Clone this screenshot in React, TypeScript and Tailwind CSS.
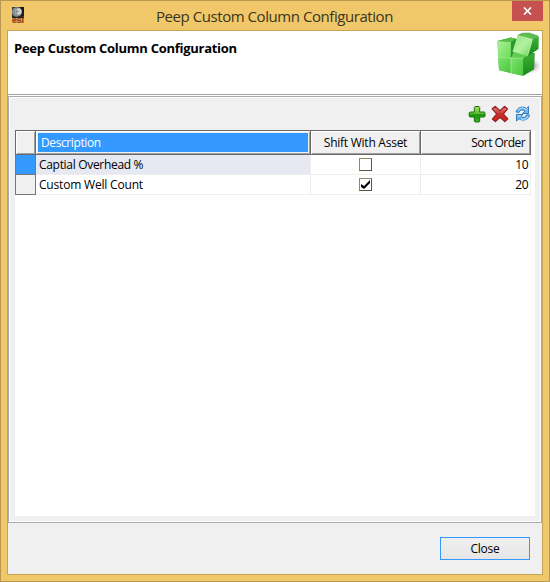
import React from "react";

function LogoIcon() {
  return (
    <svg className="absolute left-[11px] top-[6px]" width="13" height="17" viewBox="0 0 13 17">
      <rect width="12" height="11" fill="#3a3c3c" />
      <circle cx="4.9" cy="5" r="4.8" fill="#8b8e8e" />
      <path d="M8 0h4v11H8l2.5-5Z" fill="#161818" />
      <circle cx="6.5" cy="4.5" r="3.2" fill="#d0d3d3" />
      <path d="M4.8 1.5v6M3 4.5h4" stroke="#777" strokeWidth=".8" />
      <path d="M0 8.5 4 10l4-1 2-3 2-1v6H0Z" fill="#222424" opacity=".75" />
      <rect y="11" width="12" height="5" fill="#d49a58" />
      <text x="0" y="15.8" fontSize="8.5" fontWeight="700" fontFamily="Liberation Sans, sans-serif" fill="#9a430c" textLength="12" lengthAdjust="spacingAndGlyphs">esi</text>
    </svg>
  );
}

function CubeIcon() {
  return (
    <svg className="absolute left-[487px] top-0" width="47" height="49" viewBox="0 0 47 49">
      <defs>
        <linearGradient id="face" x2="1" y2="1"><stop stopColor="#abf096" /><stop offset="1" stopColor="#6bdc59" /></linearGradient>
        <linearGradient id="lower" x2="1" y2="1"><stop stopColor="#7ee36b" /><stop offset="1" stopColor="#48c63c" /></linearGradient>
        <linearGradient id="lid" x2="1" y2="1"><stop stopColor="#8ee47b" /><stop offset=".5" stopColor="#b4f2a1" /><stop offset="1" stopColor="#69d657" /></linearGradient>
        <linearGradient id="side" x2="0" y2="1"><stop stopColor="#3eaf35" /><stop offset="1" stopColor="#198a1b" /></linearGradient>
        <radialGradient id="shade"><stop stopColor="#444" stopOpacity=".8" /><stop offset="1" stopColor="#999" stopOpacity="0" /></radialGradient>
      </defs>
      <ellipse cx="35" cy="35" rx="11" ry="8" fill="url(#shade)" />
      <path d="M2.5 10 16 6.5 22 8 28 22 39.5 22 39 38 28 44.7 4 39Z" fill="#27982a" />
      <path d="M2.5 10 15.5 6.5 21 8 16 11Z" fill="#58bd48" />
      <path d="M2.5 10 16 11 15.7 27 3 26.2Z" fill="url(#face)" />
      <path d="M16 27 18.5 21.2 32 25 28.3 27.7Z" fill="#62cd50" />
      <path d="M3 26.2 15.8 27 16 42.2 4.2 39.3Z" fill="url(#lower)" />
      <path d="M15.8 27 28.3 27.7 28.3 44.7 16 42.2Z" fill="url(#lower)" />
      <path d="M3 26.2 15.8 27 28.3 27.7M15.8 27 16 42" fill="none" stroke="#b0f29c" strokeWidth=".7" />
      <path d="M28.3 27.7 39.5 22 39 38.3 28.3 44.7Z" fill="url(#side)" />
      <path d="M22.5 4.5 27 2.3 34 2 43 5 37.5 8.2Z" fill="#5fc04f" stroke="#288d25" strokeWidth=".5" />
      <path d="M37.5 8.2 43.8 5.3 43.5 18 32.5 25.2Z" fill="url(#side)" />
      <path d="M22.5 4.5 37.5 8.2 32.5 25.2 17.5 20.8Z" fill="url(#lid)" />
      <path d="M22.5 4.5 37.5 8.2 32.5 25.2" fill="none" stroke="#b8f5a6" strokeWidth=".6" />
    </svg>
  );
}

function Toolbar() {
  return (
    <div className="flex h-[32px] justify-end gap-[5px] pr-[3px] pt-[7px]">
      <svg width="18" height="18" viewBox="0 0 18 18">
        <defs><linearGradient id="plus" y2="1" x2="0"><stop stopColor="#a6df69" /><stop offset=".48" stopColor="#59b92c" /><stop offset=".52" stopColor="#1b9611" /><stop offset="1" stopColor="#35af20" /></linearGradient></defs>
        <path d="M7 1.5h4l.7.8V7h4.5l.8.8v3.4l-.8.8h-4.5v4.2l-.7.8H7l-.7-.8V12H2l-.8-.8V7.8L2 7h4.3V2.3Z" fill="url(#plus)" stroke="#1d7113" />
      </svg>
      <svg width="18" height="18" viewBox="0 0 18 18">
        <defs><linearGradient id="cross" y2="1" x2="0"><stop stopColor="#e88a80" /><stop offset=".5" stopColor="#c0302a" /><stop offset="1" stopColor="#dc2525" /></linearGradient></defs>
        <path d="M1.2 3.8 4.2 1.4 9 5.7 13.5 1.4 16.5 3.8 12.4 9l4.4 4.8-3 2.9L9 12.3l-4.6 4.4-3-2.7 4.2-5Z" fill="url(#cross)" stroke="#8f1717" strokeWidth="1.1" strokeLinejoin="round" />
      </svg>
      <svg width="18" height="18" viewBox="0 0 18 18">
        <g fill="#69b9f0" stroke="#2970b5" strokeWidth=".9" strokeLinejoin="round">
          <path d="M2 7C3 2.5 8.5.5 12.5 3.5L14.5 1.5v7H8.5l2.5-2.5C8.7 4.3 6 4.8 5 7.4Z" />
          <path d="M15.5 10c-1 4.8-6.6 6.6-10.5 3.7L2.5 16V9.5H9l-2.4 2.3C9.2 13 12 12.3 12.5 9.8Z" />
        </g>
        <path d="M4 5c2-2.5 5.5-2.6 8-.4l1.5-1M4 11h3M7 14c3 1 6 .2 7-2.8" fill="none" stroke="#bee5ff" />
      </svg>
    </div>
  );
}

function Check({ checked = false }: { checked?: boolean }) {
  return (
    <span className="flex h-[13px] w-[13px] items-center justify-center border border-[#58583c] border-t-[#8c8c6b] border-l-[#8c8c6b] bg-white">
      {checked && <svg width="9" height="9" viewBox="0 0 9 9"><path d="M0 4v3l3 2 6-6V0L3 6Z" fill="#000" /></svg>}
    </span>
  );
}

function Row({ name, order, checked = false, selected = false }: { name: string; order: string; checked?: boolean; selected?: boolean }) {
  return (
    <div className="grid h-[20px] grid-cols-[21px_275px_110px_110px] text-[12px]">
      <div className={"border-x border-b border-[#777] " + (selected ? "bg-[#3399ff]" : "bg-[#f0f0f0]")} />
      <div className={"flex items-center border-r border-b border-[#eeeeee] pl-[3px] leading-[18px] " + (selected ? "bg-[#e6e9f2]" : "bg-white")}>
        <span className={selected ? "tracking-[-0.31px]" : "tracking-[-0.19px]"}>{name}</span>
      </div>
      <div className="flex items-center justify-center border-r border-b border-[#eeeeee]"><Check checked={checked} /></div>
      <div className="flex items-center justify-end border-r border-b border-[#eeeeee] pr-[2px] tracking-[-0.5px]">{order}</div>
    </div>
  );
}

export default function App() {
  return (
    <div className="flex h-[582px] w-[550px] flex-col border border-[#b89850] bg-[#f0c869] font-['Open_Sans','Noto_Sans',sans-serif] text-black">
      <div className="relative h-[29px] shrink-0">
        <LogoIcon />
        <h1 className="ml-[155px] pt-[4px] text-[15px] leading-[22px] whitespace-nowrap text-[#3b3420]"><span className="tracking-[-0.44px]">Peep Custom Column Configuration</span></h1>
        <button aria-label="Close window" className="absolute left-[511px] top-0 flex h-[20px] w-[31px] items-center justify-center bg-[#c75050]">
          <svg width="9" height="8" viewBox="0 0 9 8"><path d="m1 .5 7 7M8 .5l-7 7" stroke="white" strokeWidth="1.7" /></svg>
        </button>
      </div>
      <main className="mx-[6px] flex h-[545px] shrink-0 flex-col border border-[#c6a456] bg-[#f0f0f0]">
        <header className="relative h-[64px] shrink-0 border-b border-[#a0a0a0] bg-white pl-[6px] pt-[8px] text-[13px] leading-[18px] font-bold">
          <span className="tracking-[-0.27px]">Peep Custom Column Configuration</span>
          <CubeIcon />
        </header>
        <div className="h-px shrink-0 bg-white" />
        <section className="h-[427px] shrink-0 border border-[#a8abb3] bg-white p-px">
          <div className="flex h-full flex-col bg-[#f0f0f0] px-[5px] pb-[5px]">
            <Toolbar />
            <div className="flex-1 bg-white">
              <div className="grid h-[25px] w-[516px] grid-cols-[21px_275px_110px_110px] border-y border-[#696969] text-[12px]">
                <div className="border-x border-[#696969] bg-[#f0f0f0] shadow-[inset_1px_1px_#fff,inset_-1px_-1px_#a0a0a0]" />
                <div className="border-r border-[#696969] bg-[#f0f0f0] p-[2px] shadow-[inset_1px_1px_#fff,inset_-1px_-1px_#a0a0a0]"><div className="flex h-full items-center bg-[#3399ff] pl-[3px] text-white"><span className="tracking-[-0.4px]">Description</span></div></div>
                <div className="flex items-center justify-center border-r border-[#696969] bg-[#f0f0f0] shadow-[inset_1px_1px_#fff,inset_-1px_-1px_#a0a0a0]"><span className="tracking-[-0.25px]">Shift With Asset</span></div>
                <div className="flex items-center justify-end border-r border-[#696969] bg-[#f0f0f0] pr-[5px] shadow-[inset_1px_1px_#fff,inset_-1px_-1px_#a0a0a0]"><span className="tracking-[-0.55px]">Sort Order</span></div>
              </div>
              <Row name="Captial Overhead %" order="10" selected />
              <Row name="Custom Well Count" order="20" checked />
            </div>
          </div>
        </section>
        <footer className="flex flex-1 items-start justify-end pr-[12px] pt-[14px]">
          <button className="flex h-[23px] w-[90px] items-center justify-center border border-[#3399ff] bg-linear-to-b from-[#f0f0f0] to-[#e5e5e5] text-[12px]"><span className="tracking-[-0.3px]">Close</span></button>
        </footer>
      </main>
    </div>
  );
}
